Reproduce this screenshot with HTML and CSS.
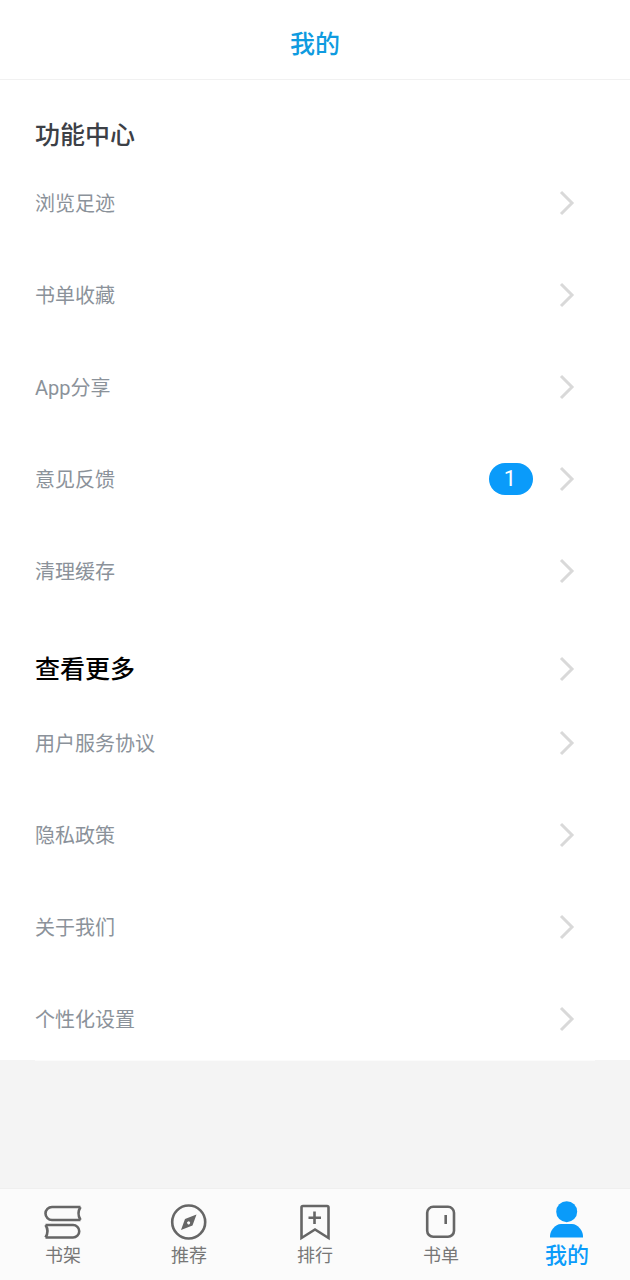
FILE: index.html
```html
<!DOCTYPE html>
<html lang="zh-CN">
<head>
  <title>我的</title>
  <meta charset="UTF-8"/>
  <meta name="viewport" content="width=device-width,initial-scale=1"/>
  <link rel="stylesheet" href="styles.css">
</head>
<body>
  <header class="topbar">我的</header>
  <main class="content">
    <div class="sheet">
      <h2 class="group-title">功能中心</h2>
      <div class="row"><span>浏览足迹</span><svg class="chevron" viewBox="0 0 16 26"><path d="M2 2l11 11L2 24"/></svg></div>
      <div class="row"><span>书单收藏</span><svg class="chevron" viewBox="0 0 16 26"><path d="M2 2l11 11L2 24"/></svg></div>
      <div class="row"><span>App分享</span><svg class="chevron" viewBox="0 0 16 26"><path d="M2 2l11 11L2 24"/></svg></div>
      <div class="row"><span>意见反馈</span><b class="badge">1</b><svg class="chevron" viewBox="0 0 16 26"><path d="M2 2l11 11L2 24"/></svg></div>
      <div class="row"><span>清理缓存</span><svg class="chevron" viewBox="0 0 16 26"><path d="M2 2l11 11L2 24"/></svg></div>
      <div class="row row-more"><h2 class="more-title">查看更多</h2><svg class="chevron" viewBox="0 0 16 26"><path d="M2 2l11 11L2 24"/></svg></div>
      <div class="row"><span>用户服务协议</span><svg class="chevron" viewBox="0 0 16 26"><path d="M2 2l11 11L2 24"/></svg></div>
      <div class="row"><span>隐私政策</span><svg class="chevron" viewBox="0 0 16 26"><path d="M2 2l11 11L2 24"/></svg></div>
      <div class="row"><span>关于我们</span><svg class="chevron" viewBox="0 0 16 26"><path d="M2 2l11 11L2 24"/></svg></div>
      <div class="row"><span>个性化设置</span><svg class="chevron" viewBox="0 0 16 26"><path d="M2 2l11 11L2 24"/></svg></div>
    </div>
    <div class="sheet-edge"></div>
  </main>
  <nav class="tabbar">
    <div class="tab">
      <svg class="tab-icon" viewBox="0 0 38 36"><path d="M36.500 2H8a6.500 6.500 0 0 0 0 13h28.500M36.500 2q-4 6.500 0 13M1.500 20H29a6 6 0 0 1 0 12.500H1.500M1.500 20q4 6 0 12.500"/></svg>
      <span>书架</span>
    </div>
    <div class="tab">
      <svg class="tab-icon" viewBox="0 0 38 36"><circle cx="18.700" cy="17" r="16.500"/><path class="fill" fill-rule="evenodd" d="M26.500 9.500L22.500 20.500 11 25 15 14zM18 16.500a1.500 1.500 0 1 0 2 2 1.500 1.500 0 0 0-2-2z"/></svg>
      <span>推荐</span>
    </div>
    <div class="tab">
      <svg class="tab-icon" viewBox="0 0 38 36"><path d="M5.500 33V2.500q0-1.500 1.500-1.500h24q1.500 0 1.500 1.500V33L19 24.500zM18.500 6.500v12.500M12.500 12.700h12.500"/></svg>
      <span>排行</span>
    </div>
    <div class="tab">
      <svg class="tab-icon" viewBox="0 0 38 36"><rect x="5.200" y="1.800" width="26.800" height="30" rx="6"/><path d="M23.700 10v9"/></svg>
      <span>书单</span>
    </div>
    <div class="tab tab-on">
      <svg class="tab-icon" viewBox="0 0 38 36"><circle class="fill" cx="18.700" cy="7.700" r="10.500"/><path class="fill" d="M2 33.500v-1.500c0-5 5-12 11-12h11c6 0 11 7 11 12v1.500z"/></svg>
      <span>我的</span>
    </div>
  </nav>
</body>
</html>
```

FILE: styles.css
```css
* {
  box-sizing: border-box;
}
html, body {
  height: 100%;
}
body {
  margin: 0;
  display: flex;
  flex-direction: column;
  height: 1280px;
  font-family: Roboto, "Noto Sans CJK SC", sans-serif;
  background: #f4f4f4;
}
.topbar {
  height: 80px;
  padding-top: 4px;
  display: flex;
  align-items: center;
  justify-content: center;
  background: #fff;
  border-bottom: 1px solid #f1f1f1;
  color: #0f9be0;
  font-size: 25px;
  font-weight: 500;
}
.content {
  flex: 1;
}
.sheet {
  height: 980px;
  padding-top: 34px;
  background: #fff;
}
.sheet-edge {
  height: 1px;
  margin: 0 35px;
  background: #fbfbfb;
}
.group-title, .more-title {
  margin: 0;
  font-size: 25px;
  font-weight: 500;
}
.group-title {
  height: 43px;
  margin-left: 35px;
  line-height: 43px;
  color: #3c4046;
}
.more-title {
  flex: 1;
  padding-bottom: 3px;
  color: #000;
}
.row {
  height: 92px;
  padding: 0 56px 0 35px;
  display: flex;
  align-items: center;
  color: #8b929a;
  font-size: 20px;
}
.row-more {
  height: 57px;
  margin-top: 23px;
}
.row span {
  flex: 1;
  padding-bottom: 2px;
}
.chevron {
  width: 16px;
  height: 26px;
  margin-right: -1px;
  fill: none;
  stroke: #d9d9d9;
  stroke-width: 3;
}
.badge {
  width: 44px;
  height: 32px;
  margin-right: 26px;
  padding-right: 2px;
  border-radius: 16px;
  background: #0a9bfa;
  color: #fff;
  font-size: 22px;
  font-weight: 400;
  line-height: 32px;
  text-align: center;
}
.tabbar {
  height: 92px;
  display: flex;
  background: #fbfbfb;
  border-top: 1px solid #efefef;
}
.tab {
  width: 126px;
  padding-top: 16px;
  display: flex;
  flex-direction: column;
  align-items: center;
  color: #777;
  font-size: 18px;
  line-height: 30px;
}
.tab-icon {
  width: 38px;
  height: 36px;
  overflow: visible;
  fill: none;
  stroke: #666;
  stroke-width: 2.600;
}
.tab-icon .fill {
  fill: #666;
  stroke: none;
}
.tab-on {
  padding-top: 15px;
  color: #0a9bfa;
  font-size: 22px;
  font-weight: 500;
}
.tab-on span {
  margin-top: 1px;
}
.tab-on .fill {
  fill: #0a9bfa;
}
```
